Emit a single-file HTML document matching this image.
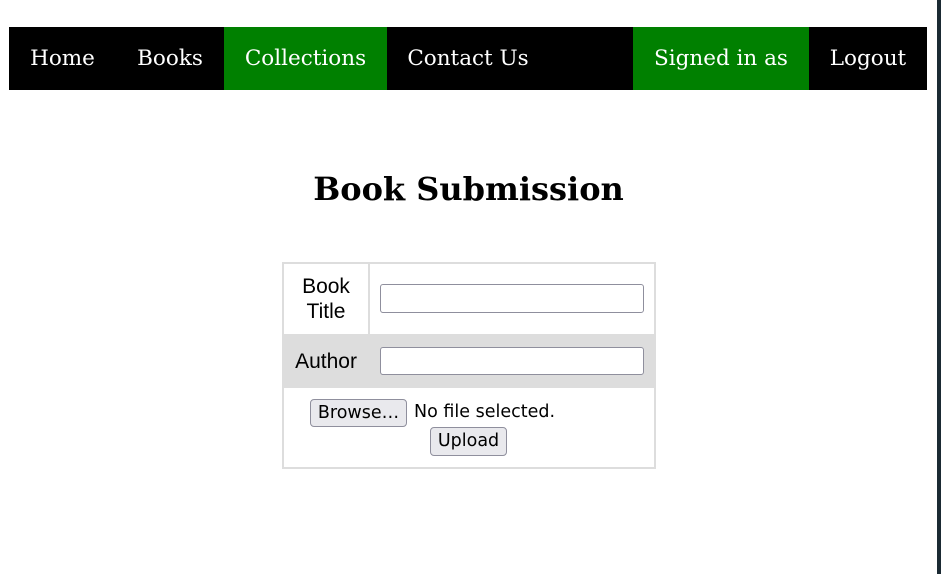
<!DOCTYPE html>
<html><head><meta charset="utf-8"><style>
html,body{margin:0;padding:0;width:941px;height:574px;overflow:hidden;background:#fff;position:relative}
.nav{position:absolute;left:9px;top:27px;width:918px;height:63px;background:#000}
.nav div{position:absolute;top:0;height:63px;line-height:63px;color:#fff;font-family:"DejaVu Serif","Liberation Serif",serif;font-size:21.5px;text-align:center}
.g{background:#008000}
h1{position:absolute;left:0;width:937px;top:169px;margin:0;text-align:center;font-family:"DejaVu Serif","Liberation Serif",serif;font-size:32px;font-weight:bold;line-height:40px}
.tbl{position:absolute;left:282px;top:262px;width:370px;height:203px;border:2px solid #ddd;box-sizing:content-box}
.lbl{position:absolute;font-family:"Liberation Sans",Arial,sans-serif;font-size:21px;text-align:center;color:#000;line-height:25px}
.inp{position:absolute;border:1px solid #8f8f9d;border-radius:3px;background:#fff;box-sizing:border-box}
.btn{position:absolute;border:1px solid #8f8f9d;border-radius:4px;background:#e9e9ed;box-sizing:border-box;font-family:"DejaVu Sans",sans-serif;font-size:17.5px;text-align:center;line-height:27px;color:#000}
.txt{position:absolute;font-family:"DejaVu Sans",sans-serif;font-size:17.5px;line-height:27px}
.edge{position:absolute;left:937px;top:0;width:4px;height:574px;background:#1b2a33}
</style></head><body>
<div class="nav">
<div style="left:0;width:107px">Home</div>
<div style="left:107px;width:108px">Books</div>
<div class="g" style="left:215px;width:163px">Collections</div>
<div style="left:378px;width:162px">Contact Us</div>
<div class="g" style="left:624px;width:176px">Signed in as</div>
<div style="left:800px;width:118px">Logout</div>
</div>
<h1>Book Submission</h1>
<div class="tbl">
<div style="position:absolute;left:84px;top:0;width:2px;height:70px;background:#ddd"></div>
<div style="position:absolute;left:0;top:70px;width:370px;height:54px;background:#ddd"></div>
<div class="lbl" style="left:0;top:10px;width:84px">Book<br>Title</div>
<div class="lbl" style="left:0;top:85px;width:84px">Author</div>
</div>
<div class="inp" style="left:380px;top:284px;width:264px;height:29px"></div>
<div class="inp" style="left:380px;top:347px;width:264px;height:28px"></div>
<div class="btn" style="left:310px;top:399px;width:97px;height:28px">Browse…</div>
<div class="txt" style="left:414px;top:399px">No file selected.</div>
<div class="btn" style="left:430px;top:427px;width:77px;height:29px">Upload</div>
<div class="edge"></div>
</body></html>
